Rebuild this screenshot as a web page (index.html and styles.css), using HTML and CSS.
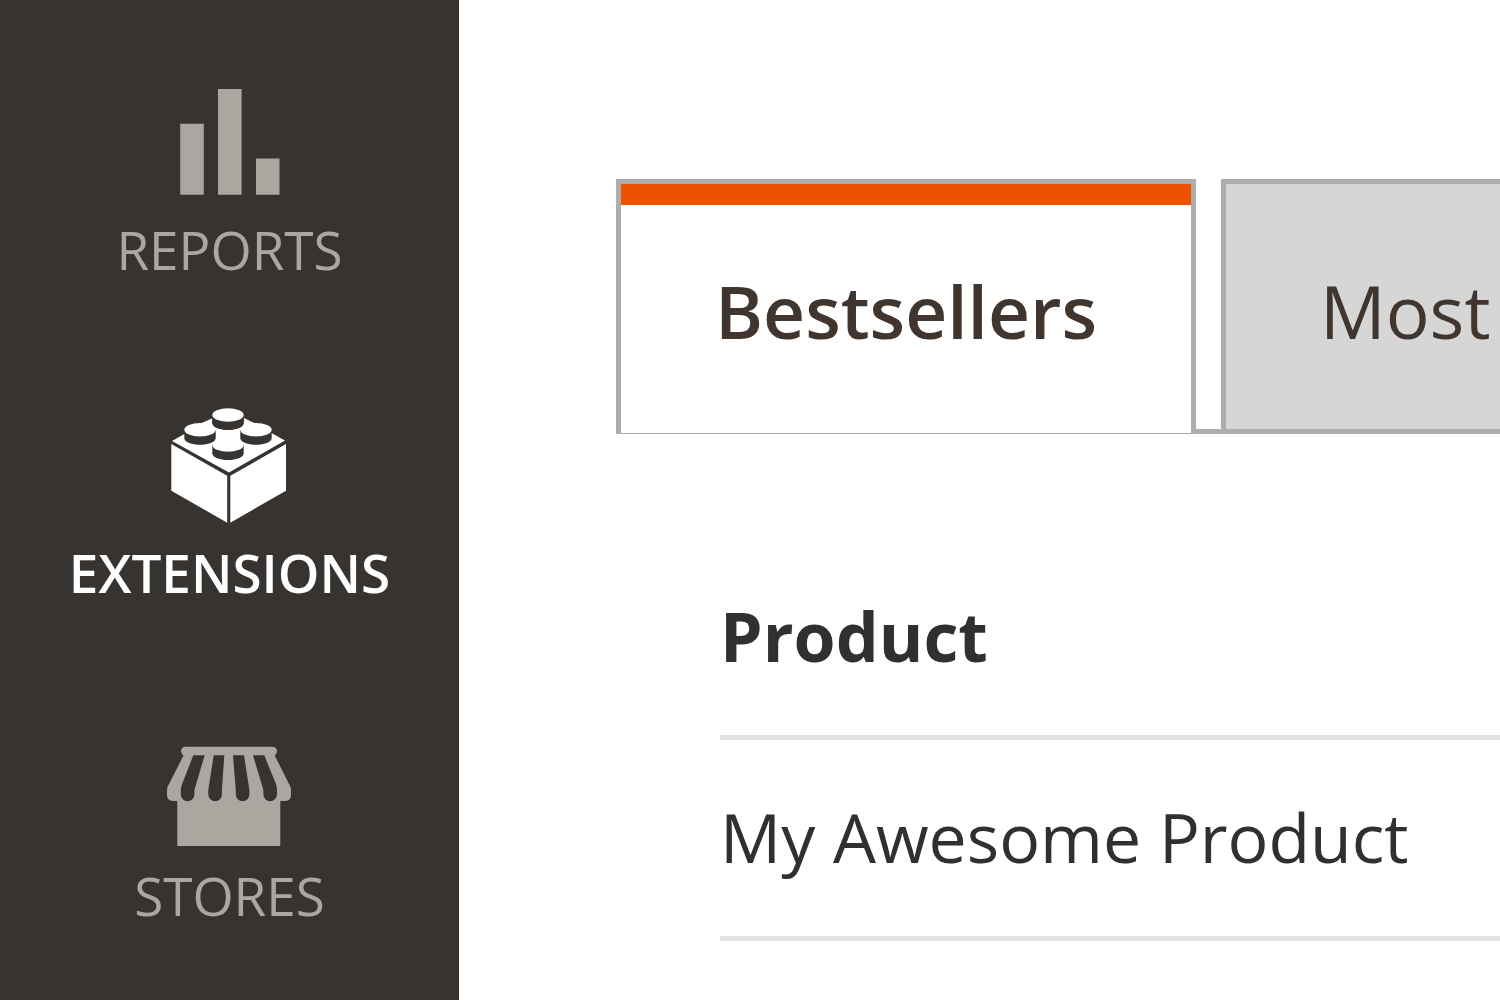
FILE: index.html
```html
<!DOCTYPE html>
<html lang="en">
<head>
    <meta charset="UTF-8">
    <meta name="viewport" content="width=device-width, initial-scale=1.0">
    <title>Dashboard</title>
    <link rel="stylesheet" href="styles.css">
</head>
<body>
    <div class="page">
        <nav class="menu">
            <a class="menu-item" href="#reports">
                <svg class="menu-icon" viewBox="0 0 129 130" aria-hidden="true">
                    <path d="M15.2 45.7h23.6v71H15.2zM53 11h23.6v105.7H53zM91 80.6h23.5v36.1H91z"/>
                </svg>
                <span>REPORTS</span>
            </a>
            <a class="menu-item active" href="#extensions">
                <svg class="menu-icon" viewBox="0 0 129 130" aria-hidden="true">
                    <!-- brick -->
                    <path d="M7 40L47 17.5L64 10L80 17.5L120 39.5L64 71.6z"/>
                    <path d="M6.3 43L62.2 74.8v46.9L6.3 89.7z"/>
                    <path d="M65.3 74.8L121 43v46.7L65.3 121.7z"/>
                    <!-- studs -->
                    <path class="shade" d="M47.3 14v8a15.7 6.7 0 0 0 31.4 0v-8z"/>
                    <path class="shade" d="M47.3 14V22C47.3 31 78.7 31 78.7 22V14z"/>
                    <ellipse cx="63" cy="14" rx="15.7" ry="6.7"/>
                    <path d="M46 18L50 30L36 22.2zM80 18L76 30L90 22.2z"/>
                    <path class="shade" d="M47.3 15.5V22C47.3 31 78.7 31 78.7 22V15.5C78.7 23 47.3 23 47.3 15.5z"/>
                    <path class="shade" d="M19.3 28.7V37C19.3 46 50.7 46 50.7 37V28.7z"/>
                    <ellipse cx="35" cy="28.7" rx="15.7" ry="6.7"/>
                    <path class="shade" d="M75.3 28.7V37C75.3 46 106.7 46 106.7 37V28.7z"/>
                    <ellipse cx="91" cy="28.7" rx="15.7" ry="6.7"/>
                    <path class="shade" d="M47.3 44V52.3C47.3 61.3 78.7 61.3 78.7 52.3V44z"/>
                    <ellipse cx="63" cy="44" rx="15.7" ry="6.7"/>
                </svg>
                <span>EXTENSIONS</span>
            </a>
            <a class="menu-item" href="#stores">
                <svg class="menu-icon" viewBox="0 0 129 130" aria-hidden="true">
                    <rect x="16" y="22.7" width="96" height="8.8" rx="4.4"/>
                    <path d="M19.3 30H109L125 62Q126 64 126 66V71Q126 77 119.5 77H115.3V122H12.3V77H9Q2 77 2 71V66Q2 64 3 62z"/>
                    <path class="shade" d="M28.3 31.3H39.7L29.4 66V70.5a6.8 6.8 0 0 1-13.6 0V66Q16 62 17.5 59z"/>
                    <path class="shade" d="M48.7 31.3H59.3L56.9 66V70.5a6.8 6.8 0 0 1-13.6 0V66z"/>
                    <path class="shade" d="M68 31.3H79L84.4 66V70.5a6.8 6.8 0 0 1-13.6 0V66z"/>
                    <path class="shade" d="M88 31.3H99.3L110.500 59Q112 62 112 66V70.500a6.800 6.800 0 0 1-13.600 0V66z"/>
                </svg>
                <span>STORES</span>
            </a>
        </nav>

        <main class="content">
            <div class="tabs" role="tablist">
                <button type="button" class="tab active" role="tab" aria-selected="true">Bestsellers</button>
                <button type="button" class="tab" role="tab" aria-selected="false">Most</button>
            </div>
            <div class="tab-panel" role="tabpanel">
                <table class="data-table">
                    <thead>
                        <tr><th scope="col">Product</th></tr>
                    </thead>
                    <tbody>
                        <tr><td>My Awesome Product</td></tr>
                    </tbody>
                </table>
            </div>
        </main>
    </div>
</body>
</html>
```
FILE: styles.css
```css
* {
    box-sizing: border-box;
}
body {
    margin: 0;
    font-family: "Open Sans", "Noto Sans", sans-serif;
    background-color: #fff;
    color: #303030;
}
.page {
    display: flex;
    min-height: 100vh;
    overflow: hidden;
}

/* Left menu */
.menu {
    flex: 0 0 459px;
    background-color: #373330;
}
.menu-item {
    display: flex;
    flex-direction: column;
    align-items: center;
    gap: 10px;
    padding: 78px 0 41px;
    color: #aaa6a0;
    font-size: 53px;
    line-height: 64px;
    text-decoration: none;
}
.menu-item.active {
    color: #fff;
    font-weight: 600;
}
.menu-icon {
    width: 129px;
    height: 130px;
    fill: currentColor;
}
.menu-icon .shade {
    fill: #373330;
}

/* Tabs */
.content {
    flex: 1;
    min-width: 0;
    padding: 179px 0 0 157px;
}
.tabs {
    display: flex;
    gap: 25px;
    box-shadow: inset 0 -5px #adadad;
}
.tab {
    flex: none;
    padding: 77px 94px 68px;
    border: 5px solid #adadad;
    background-color: #d6d6d6;
    color: #41362f;
    font-family: inherit;
    font-size: 73px;
    line-height: 100px;
    white-space: nowrap;
    cursor: pointer;
}
.tab.active {
    padding-bottom: 72px;
    border-bottom-width: 1px;
    background-color: #fff;
    box-shadow: inset 0 21px #eb5202;
    font-weight: 600;
}

/* Table */
.tab-panel {
    padding: 105px 0 0 104px;
}
.data-table {
    width: 100%;
    border-collapse: separate;
    border-spacing: 0;
}
.data-table th,
.data-table td {
    padding: 51px 0 53px;
    border-bottom: 5px solid #e3e3e3;
    font-size: 68px;
    line-height: 92px;
    text-align: left;
    white-space: nowrap;
}
```
